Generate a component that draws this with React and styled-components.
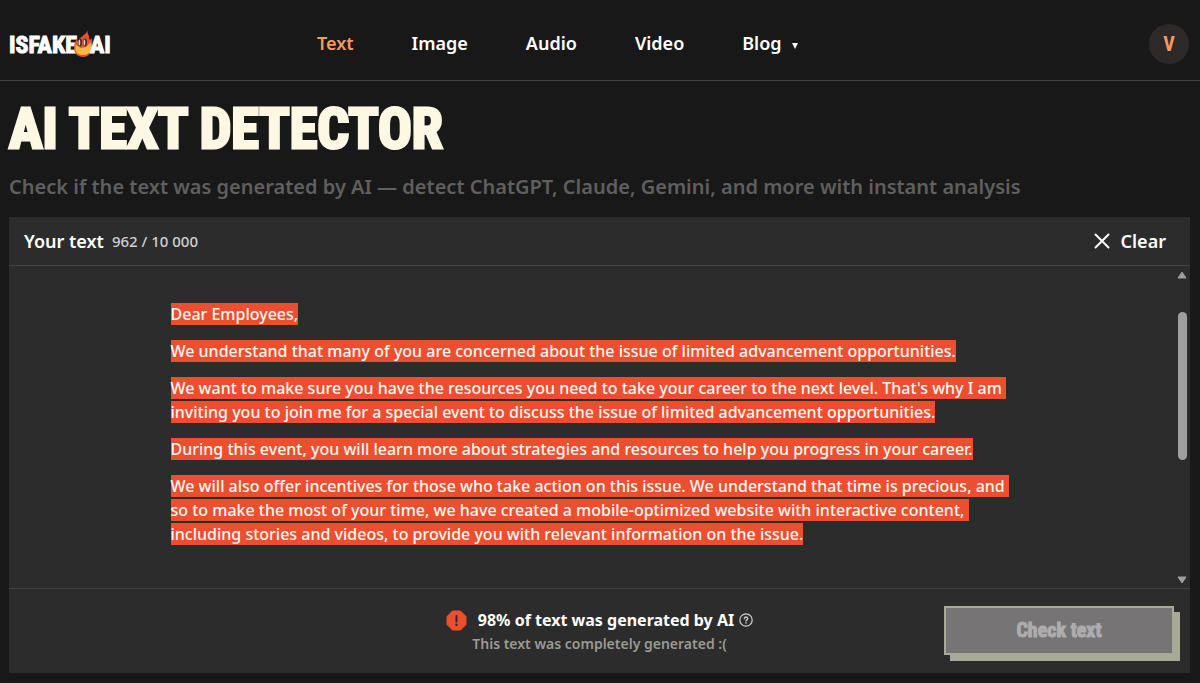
import React from "react";
import styled, { createGlobalStyle } from "styled-components";

const GlobalStyle = createGlobalStyle`
  * { box-sizing: border-box; }
  body {
    margin: 0;
    background: #181818;
    color: #ffffff;
    font-family: "Noto Sans", "Open Sans", sans-serif;
  }
  h1, h2, p { margin: 0; }
  button { font-family: inherit; color: inherit; cursor: pointer; }
`;

const display = `"Liberation Sans Narrow", "Roboto Condensed", "Liberation Sans", sans-serif`;

const Header = styled.header`
  display: flex;
  align-items: center;
  height: 81px;
  padding: 7px 11px 0 9px;
  border-bottom: 1px solid #444444;
`;

const Logo = styled.a`
  display: flex;
  align-items: center;
  width: 102px;
  padding-top: 2px;
  color: #ffffff;
  font: 700 24px/24px ${display};
  text-decoration: none;
  -webkit-text-stroke: 1px #ffffff;
`;

const Flame = styled.svg`
  flex: none;
  width: 18px;
  height: 28px;
  margin: -2px -2px 0 -3px;
`;

const Nav = styled.nav`
  display: flex;
  flex: 1;
  gap: 58px;
  margin-left: 206px;
  padding-bottom: 2px;
`;

const NavLink = styled.a`
  color: ${(p) => (p.$active ? "#f79a5f" : "#ffffff")};
  font-size: 18px;
  font-weight: 600;
  line-height: 24px;
  text-decoration: none;
`;

const Caret = styled.svg`
  width: 6px;
  height: 7px;
  margin-left: 10px;
  vertical-align: 1px;
`;

const Avatar = styled.button`
  width: 40px;
  height: 40px;
  padding: 0;
  border: 0;
  border-radius: 50%;
  background: #2d2929;
  color: #f79a5f;
  font: 700 20px/40px ${display};
`;

const Main = styled.main`
  padding: 16px 10px 10px 9px;
`;

const Title = styled.h1`
  color: #fdf8e4;
  font: 700 56px/64px ${display};
  -webkit-text-stroke: 3px #fdf8e4;
`;

const Subtitle = styled.p`
  margin-top: 12px;
  color: #5f5f5f;
  font-size: 20px;
  font-weight: 600;
  line-height: 28px;
`;

const Card = styled.section`
  margin-top: 16px;
  background: #2c2c2c;
`;

const CardHeader = styled.div`
  display: flex;
  align-items: center;
  height: 49px;
  padding: 0 24px 0 15px;
  border-bottom: 1px solid #434343;
`;

const CardTitle = styled.h2`
  font-size: 18px;
  font-weight: 600;
  line-height: 24px;
`;

const Counter = styled.span`
  flex: 1;
  margin-left: 8px;
  color: #d0d0d0;
  font-size: 15px;
  font-weight: 500;
`;

const ClearButton = styled.button`
  display: flex;
  align-items: center;
  gap: 11px;
  padding: 0;
  border: 0;
  background: none;
  font-size: 18px;
  font-weight: 600;
  line-height: 24px;
`;

const CardBody = styled.div`
  display: flex;
  height: 322px;
`;

const Viewport = styled.div`
  flex: 1;
  overflow: hidden;
  padding: 36px 24px 0;
`;

const Letter = styled.div`
  display: flex;
  flex-direction: column;
  gap: 13px;
  max-width: 842px;
  margin: 0 auto;
  font-size: 16px;
  font-weight: 500;
  line-height: 24px;
`;

const Flagged = styled.mark`
  background: #ec4f30;
  color: #fff6f0;
`;

const Rail = styled.div`
  display: flex;
  flex-direction: column;
  align-items: center;
  width: 16px;
  padding: 5px 0 4px;
`;

const Thumb = styled.div`
  width: 9px;
  height: 148px;
  margin: 33px 0 auto;
  border-radius: 5px;
  background: #a0a0a0;
`;

const CardFooter = styled.footer`
  display: grid;
  grid-template-columns: 1fr auto 1fr;
  align-items: center;
  height: 85px;
  padding: 0 16px 2px;
  border-top: 1px solid #404040;
`;

const Verdict = styled.div`
  grid-column: 2;
  display: flex;
  flex-direction: column;
  align-items: center;
  padding-top: 4px;
`;

const VerdictTitle = styled.p`
  display: flex;
  align-items: center;
  font-size: 16px;
  font-weight: 700;
  line-height: 24px;

  svg:first-child { margin-right: 11px; }
  svg:last-child { margin-left: 5px; }
`;

const VerdictNote = styled.p`
  color: #9b9a92;
  font-size: 14px;
  font-weight: 600;
  line-height: 24px;
`;

const CheckButton = styled.button`
  justify-self: end;
  width: 230px;
  height: 49px;
  padding: 0;
  border: 2px solid #a8aa98;
  background: #767474;
  box-shadow: 6px 6px 0 #a8aa98;
  color: #aeadad;
  font: 700 20px/45px ${display};
  -webkit-text-stroke: 1px #aeadad;
`;

const links = ["Text", "Image", "Audio", "Video"];

const letter = [
  ["Dear Employees,"],
  ["We understand that many of you are concerned about the issue of limited advancement opportunities."],
  [
    "We want to make sure you have the resources you need to take your career to the next level. That's why I am",
    "inviting you to join me for a special event to discuss the issue of limited advancement opportunities.",
  ],
  ["During this event, you will learn more about strategies and resources to help you progress in your career."],
  [
    "We will also offer incentives for those who take action on this issue. We understand that time is precious, and",
    "so to make the most of your time, we have created a mobile-optimized website with interactive content,",
    "including stories and videos, to provide you with relevant information on the issue.",
  ],
];

function ScrollArrow({ down }) {
  return (
    <svg width="10" height="8" viewBox="0 0 10 8" aria-hidden="true">
      <path
        d={down ? "M1 1h8L5 7z" : "M5 1l4 6H1z"}
        fill="#a0a0a0"
        stroke="#a0a0a0"
        strokeLinejoin="round"
      />
    </svg>
  );
}

export default function App() {
  return (
    <>
      <GlobalStyle />
      <Header>
        <Logo href="#" aria-label="ISFAKE AI">
          <span>ISFAKE</span>
          <Flame viewBox="0 0 18 28">
            <path d="M14 0c-1 3 0 4 1 6 0 2 0 3 1 4l1.500-2c1 4 .5 6 .5 9 0 6-4 10-9 10s-9-4-9-9c0-4 1-6 3-9l1 3c1-5 7-6 10-12z" fill="#e9502c" />
            <path d="M1.500 15l2.500 1 3 2 5-1 3-3 1.500-2c1 4 1 6 .5 8-1 3-4 5-8 5s-7-2-7.500-5z" fill="#fbb742" />
            <ellipse cx="6" cy="12.500" rx="2" ry="4" fill="#35302a" />
            <ellipse cx="11" cy="12.500" rx="2" ry="4" fill="#35302a" />
            <ellipse cx="5.400" cy="12.500" rx="0.900" ry="3" fill="#d9d3c0" />
            <ellipse cx="10.400" cy="12.500" rx="0.900" ry="3" fill="#d9d3c0" />
          </Flame>
          <span>AI</span>
        </Logo>
        <Nav>
          {links.map((name, i) => (
            <NavLink href="#" key={name} $active={i === 0}>{name}</NavLink>
          ))}
          <NavLink href="#">
            Blog
            <Caret viewBox="0 0 6 7"><path d="M0 1h6L3 7z" fill="#ffffff" /></Caret>
          </NavLink>
        </Nav>
        <Avatar aria-label="Account">V</Avatar>
      </Header>
      <Main>
        <Title>AI TEXT DETECTOR</Title>
        <Subtitle>
          Check if the text was generated by AI — detect ChatGPT, Claude, Gemini, and more with instant analysis
        </Subtitle>
        <Card>
          <CardHeader>
            <CardTitle>Your text</CardTitle>
            <Counter>962 / 10 000</Counter>
            <ClearButton>
              <svg width="16" height="16" viewBox="0 0 16 16" aria-hidden="true">
                <path d="M1.500 1.500l13 13M14.500 1.500l-13 13" stroke="#ffffff" strokeWidth="2" strokeLinecap="round" />
              </svg>
              Clear
            </ClearButton>
          </CardHeader>
          <CardBody>
            <Viewport>
              <Letter>
                {letter.map((lines) => (
                  <p key={lines[0]}>
                    <Flagged>
                      {lines.map((line, i) => (
                        <React.Fragment key={line}>
                          {line}
                          {i < lines.length - 1 && <>{"\u00a0"}<br /></>}
                        </React.Fragment>
                      ))}
                    </Flagged>
                  </p>
                ))}
              </Letter>
            </Viewport>
            <Rail>
              <ScrollArrow />
              <Thumb />
              <ScrollArrow down />
            </Rail>
          </CardBody>
          <CardFooter>
            <Verdict>
              <VerdictTitle>
                <svg width="21" height="21" viewBox="0 0 21 21" aria-hidden="true">
                  <path d="M6.500 1h8L20 6.500v8L14.500 20h-8L1 14.500v-8z" fill="#ec4f30" stroke="#ec4f30" strokeLinejoin="round" />
                  <path d="M10.500 6v5.500" stroke="#2c2c2c" strokeWidth="2" strokeLinecap="round" />
                  <circle cx="10.500" cy="14.800" r="1.200" fill="#2c2c2c" />
                </svg>
                98% of text was generated by AI
                <svg width="14" height="14" viewBox="0 0 14 14" fill="none" stroke="#d0d0d0" aria-hidden="true">
                  <circle cx="7" cy="7" r="6.200" strokeWidth="1.200" />
                  <path d="M5.300 5.700c0-2.300 3.500-2.200 3.400 0 0 1.200-1.700 1.200-1.700 2.400" strokeWidth="1.300" strokeLinecap="round" />
                  <circle cx="7" cy="10" r="0.800" fill="#d0d0d0" stroke="none" />
                </svg>
              </VerdictTitle>
              <VerdictNote>This text was completely generated :(</VerdictNote>
            </Verdict>
            <CheckButton>Check text</CheckButton>
          </CardFooter>
        </Card>
      </Main>
    </>
  );
}
